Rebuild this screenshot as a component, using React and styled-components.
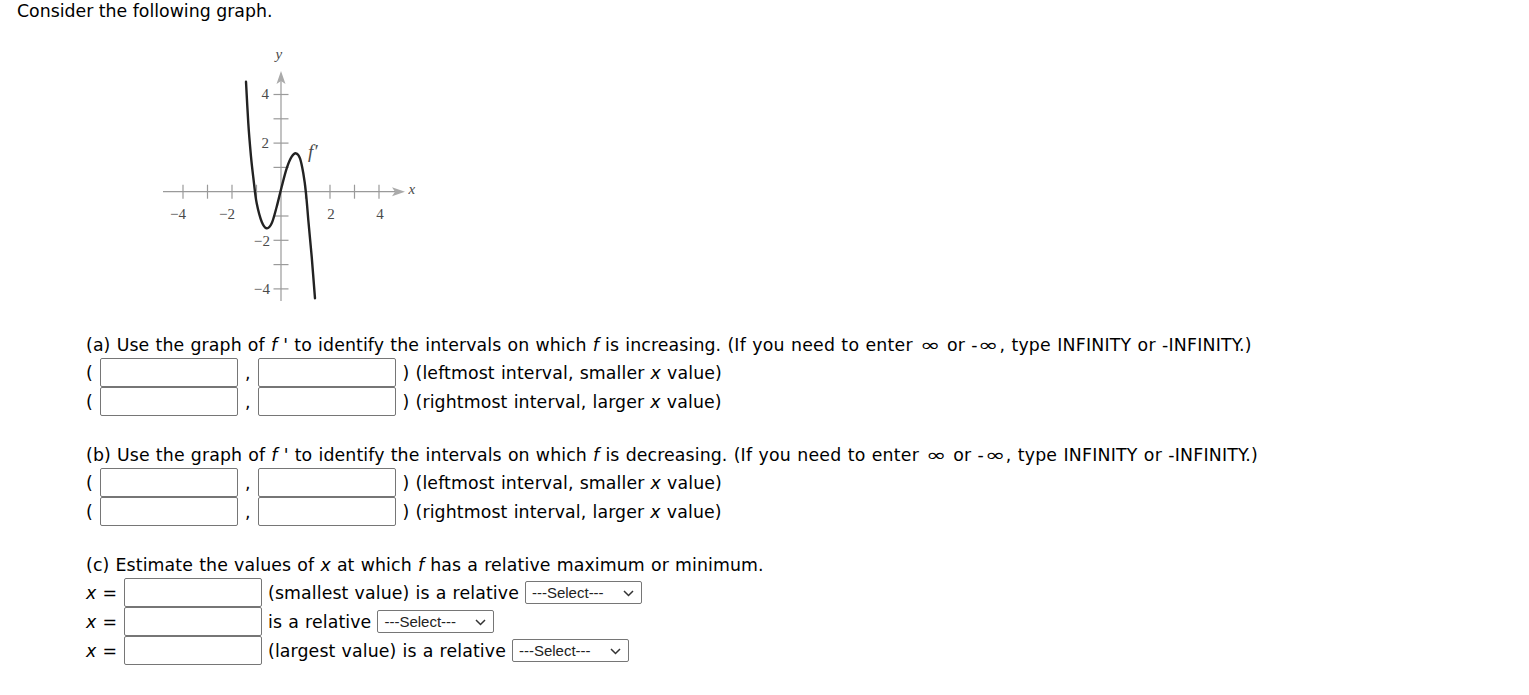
import React from "react";
import styled, { createGlobalStyle } from "styled-components";

const Global = createGlobalStyle`
  html, body { margin: 0; padding: 0; background: #fff; }
  body { font-family: "DejaVu Sans", Verdana, sans-serif; color: #000; }
`;

const Page = styled.div`
  padding: 1px 0 0 17px;
  font-size: 17.33px;
  line-height: 20px;
  letter-spacing: 0.12px;
  word-spacing: 0.5px;
`;

const Intro = styled.div`
  letter-spacing: 0;
  word-spacing: 0;
`;

const GraphWrap = styled.div`
  margin: 21px 0 0 141px;
  width: 262px;
  height: 266px;
`;

const Questions = styled.div`
  margin: 27px 0 0 69px;
`;

const Section = styled.div`
  margin-bottom: 29px;
`;

const Prompt = styled.div`
  margin-bottom: 3px;
  white-space: nowrap;
`;

const Note = styled.span`
  letter-spacing: 0.22px;
`;

const Row = styled.div`
  display: flex;
  align-items: center;
  height: 29px;
  white-space: nowrap;
`;

const Txt = styled.span`
  margin-left: ${(p) => p.$ml || 0}px;
`;

const I = styled.i`
  font-style: italic;
`;

const Inf = styled.span`
  display: inline-block;
  transform: scaleX(1.4);
  margin: 0 3.5px;
`;

const Field = styled.input`
  box-sizing: border-box;
  width: ${(p) => p.$w || 138}px;
  height: 29px;
  margin: 0 0 0 ${(p) => p.$ml || 0}px;
  border: 1px solid #767676;
  border-radius: 2px;
  padding: 0 4px;
  font: inherit;
  background: #fff;
`;

const SelectWrap = styled.span`
  position: relative;
  display: inline-flex;
  margin-left: ${(p) => p.$ml || 0}px;
`;

const Select = styled.select`
  box-sizing: border-box;
  appearance: none;
  -webkit-appearance: none;
  width: 117px;
  height: 23px;
  border: 1px solid #767676;
  border-radius: 2px;
  font-family: "Liberation Sans", Arial, sans-serif;
  font-size: 15px;
  letter-spacing: 0;
  color: #222;
  background: #fff;
  padding: 0 0 0 6px;
`;

const Chevron = styled.svg`
  position: absolute;
  right: 8px;
  top: 9px;
  pointer-events: none;
`;

const XLabel = styled.span`
  display: inline-block;
  width: 38px;
`;

function smoothPath(pts) {
  let d = `M${pts[0][0]},${pts[0][1]}`;
  for (let i = 0; i < pts.length - 1; i++) {
    const p0 = pts[i - 1] || pts[i];
    const p1 = pts[i];
    const p2 = pts[i + 1];
    const p3 = pts[i + 2] || p2;
    const c1 = [p1[0] + (p2[0] - p0[0]) / 6, p1[1] + (p2[1] - p0[1]) / 6];
    const c2 = [p2[0] - (p3[0] - p1[0]) / 6, p2[1] - (p3[1] - p1[1]) / 6];
    d += ` C${c1[0].toFixed(1)},${c1[1].toFixed(1)} ${c2[0].toFixed(1)},${c2[1].toFixed(1)} ${p2[0]},${p2[1]}`;
  }
  return d;
}

const curvePts = [
  [246, 81.7], [248.3, 123.3], [251, 156.7], [254, 183.3], [256.7, 203.3],
  [261.7, 221.7], [266.7, 228.3], [271.7, 223.3], [276.7, 206.7], [281.7, 186.7],
  [286.7, 168.3], [291.7, 156.7], [296, 153.3], [300, 158.3], [303.3, 173.3],
  [306, 193.3], [308.3, 220], [311.7, 256.7], [315, 298.3],
];

function Graph() {
  const ox = 281;
  const oy = 191.7;
  const ux = 24.5;
  const uy = 24.3;
  const ticks = [-4, -3, -2, -1, 1, 2, 3, 4];
  const labelStyle = { fontFamily: "'Liberation Serif', 'Times New Roman', serif", fontSize: 15, fill: "#4a4a4a" };
  return (
    <svg width="262" height="266" viewBox="158 42 262 266">
      <g stroke="#9a9a9a" strokeWidth="1.2" fill="none">
        <line x1="163" y1={oy} x2="400" y2={oy} />
        <line x1={ox} y1="301" x2={ox} y2="76" />
        {ticks.map((k) => (
          <line key={"x" + k} x1={ox + k * ux} y1={oy - 7} x2={ox + k * ux} y2={oy + 7} />
        ))}
        {ticks.map((k) => (
          <line key={"y" + k} x1={ox - 7.5} y1={oy - k * uy} x2={ox + 7.5} y2={oy - k * uy} />
        ))}
      </g>
      <path d={`M405,${oy} L392,${oy - 4.5} L395,${oy} L392,${oy + 4.5} Z`} fill="#aaa" />
      <path d={`M${ox},71 L${ox - 4.5},84 L${ox},81 L${ox + 4.5},84 Z`} fill="#aaa" />
      <g style={labelStyle}>
        <text x="178" y="219" textAnchor="middle">−4</text>
        <text x="227" y="219" textAnchor="middle">−2</text>
        <text x="331" y="219" textAnchor="middle">2</text>
        <text x="380" y="219" textAnchor="middle">4</text>
        <text x="269" y="99" textAnchor="end">4</text>
        <text x="269" y="148" textAnchor="end">2</text>
        <text x="270" y="246" textAnchor="end">−2</text>
        <text x="270" y="294" textAnchor="end">−4</text>
        <text x="279" y="59" textAnchor="middle" fontStyle="italic">y</text>
        <text x="412" y="194" textAnchor="middle" fontStyle="italic">x</text>
        <text x="308" y="158" fontStyle="italic" fontSize="19">f′</text>
      </g>
      <path d={smoothPath(curvePts)} fill="none" stroke="#222" strokeWidth="2.4" strokeLinecap="round" />
    </svg>
  );
}

function IntervalRow({ note, xword }) {
  return (
    <Row>
      <Txt>(</Txt>
      <Field $ml={7} />
      <Txt $ml={7}>,</Txt>
      <Field $ml={7} />
      <Txt $ml={7}>
        ) ({note} interval, {xword} <I>x</I> value)
      </Txt>
    </Row>
  );
}

function SelectBox({ ml }) {
  return (
    <SelectWrap $ml={ml}>
      <Select defaultValue="">
        <option value="">---Select---</option>
        <option value="max">maximum</option>
        <option value="min">minimum</option>
      </Select>
      <Chevron width="11" height="7" viewBox="0 0 11 7">
        <path d="M1 1 L5.5 5.5 L10 1" fill="none" stroke="#333" strokeWidth="1.5" />
      </Chevron>
    </SelectWrap>
  );
}

function InfNote() {
  return (
    <Note>
      (If you need to enter <Inf>∞</Inf> or -<Inf>∞</Inf>, type INFINITY or -INFINITY.)
    </Note>
  );
}

export default function App() {
  return (
    <Page>
      <Global />
      <Intro>Consider the following graph.</Intro>
      <GraphWrap>
        <Graph />
      </GraphWrap>
      <Questions>
        <Section>
          <Prompt>
            (a) Use the graph of <I>f</I> ' to identify the intervals on which <I>f</I> is increasing. <InfNote />
          </Prompt>
          <IntervalRow note="leftmost" xword="smaller" />
          <IntervalRow note="rightmost" xword="larger" />
        </Section>
        <Section>
          <Prompt>
            (b) Use the graph of <I>f</I> ' to identify the intervals on which <I>f</I> is decreasing. <InfNote />
          </Prompt>
          <IntervalRow note="leftmost" xword="smaller" />
          <IntervalRow note="rightmost" xword="larger" />
        </Section>
        <Section>
          <Prompt>
            (c) Estimate the values of <I>x</I> at which <I>f</I> has a relative maximum or minimum.
          </Prompt>
          <Row>
            <XLabel><I>x</I> =</XLabel>
            <Field />
            <Txt $ml={6}>(smallest value) is a relative</Txt>
            <SelectBox ml={6} />
          </Row>
          <Row>
            <XLabel><I>x</I> =</XLabel>
            <Field />
            <Txt $ml={6}>is a relative</Txt>
            <SelectBox ml={6} />
          </Row>
          <Row>
            <XLabel><I>x</I> =</XLabel>
            <Field />
            <Txt $ml={6}>(largest value) is a relative</Txt>
            <SelectBox ml={6} />
          </Row>
        </Section>
      </Questions>
    </Page>
  );
}
